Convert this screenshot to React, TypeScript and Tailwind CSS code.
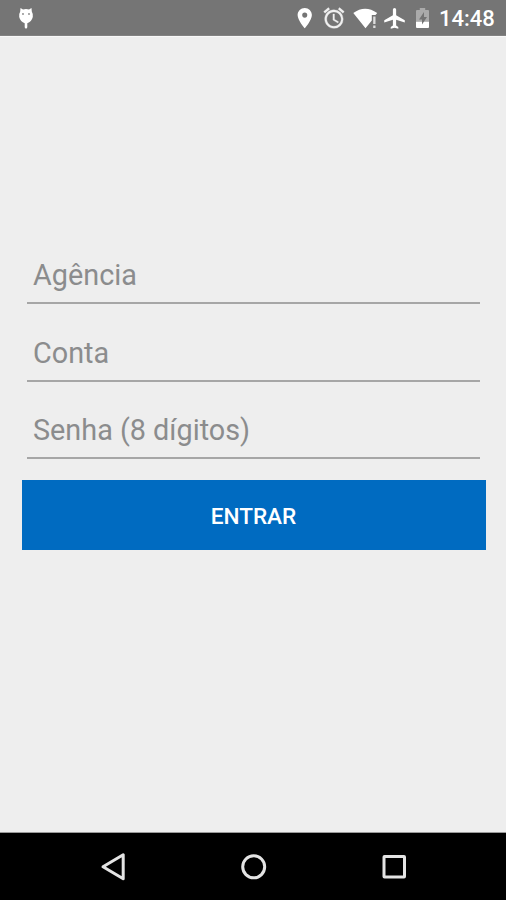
import type { ReactNode } from "react";

function Field({ label }: { label: string }) {
  return (
    <label className="flex h-[77.5px] w-[453px] flex-col justify-end">
      <span className="pl-[6px] text-[28.8px] leading-[34px] text-[#8b8c8d]">{label}</span>
      <span className="mt-[10px] h-[2px] w-full bg-[#a6a6a6]" />
    </label>
  );
}

function StatusIcon({ w, children }: { w: number; children: ReactNode }) {
  return (
    <svg width={w} height="35" viewBox={`0 0 ${w} 35`} className="block shrink-0" fill="#fff">
      {children}
    </svg>
  );
}

function StatusBar() {
  return (
    <header className="flex h-[36px] shrink-0 items-start border-b border-[#828282] bg-[#757575]">
      <div className="flex w-[292px] pl-[16px]">
        <StatusIcon w={20}>
          <path d="M4.5 8 L7 9.6 Q10 8.6 13 9.6 L15.5 8 L15.8 11.5 Q17.3 14 16.8 17 Q15.5 22 11.3 23.2 V27 Q11.3 28.6 10 28.6 Q8.7 28.6 8.7 27 V23.2 Q4.5 22 3.2 17 Q2.7 14 4.2 11.5Z" />
          <circle cx="7" cy="14" r="0.9" fill="#858585" />
          <circle cx="13" cy="14" r="0.9" fill="#858585" />
        </StatusIcon>
      </div>
      <StatusIcon w={29}>
        <path transform="translate(0.5 5.9) scale(1.02)" d="M12 2C8.13 2 5 5.13 5 9c0 5.25 7 13 7 13s7-7.75 7-13c0-3.87-3.13-7-7-7zm0 9.5a2.5 2.5 0 1 1 0-5 2.5 2.5 0 0 1 0 5z" />
      </StatusIcon>
      <StatusIcon w={31}>
        <path transform="translate(0.6 5.7) scale(1.03)" fill="#f0f0f0" stroke="#f0f0f0" strokeWidth="0.3" d="M22 5.72l-4.6-3.86-1.29 1.53 4.6 3.86L22 5.72zM7.88 3.39L6.6 1.86 2 5.71l1.29 1.53 4.59-3.85zM12.5 8H11v6l4.75 2.85.75-1.23-4-2.37V8zM12 4c-4.97 0-9 4.03-9 9s4.02 9 9 9a9 9 0 0 0 0-18zm0 16c-3.87 0-7-3.13-7-7s3.13-7 7-7 7 3.13 7 7-3.13 7-7 7z" />
      </StatusIcon>
      <StatusIcon w={30}>
        <path d="M1.3 13 Q13 4.5 25.2 13 L23.5 15 H19.8 V20.5 L13.5 28.3Z" />
        <path d="M21.2 16.5h2.3v7.5h-2.3zM21.2 25.5h2.3v2.5h-2.3z" fill="#ddd" />
      </StatusIcon>
      <StatusIcon w={31}>
        <path transform="translate(0.1 5.8) scale(1.08 1.04)" d="M21 16v-2l-8-5V3.5a1.5 1.5 0 0 0-3 0V9l-8 5v2l8-2.5V19l-2 1.5V22l3.5-1 3.5 1v-1.5L13 19v-5.5l8 2.5z" />
      </StatusIcon>
      <StatusIcon w={27}>
        <path d="M4 10H6.8V8h5.4v2H15a1 1 0 0 1 1 1v10H3V11a1 1 0 0 1 1-1z" fill="#aaa" />
        <path d="M3 21.5h13V27a1 1 0 0 1-1 1H4a1 1 0 0 1-1-1z" />
        <path d="M11 12L6 19.5h3V24.5l5-7.5h-3z" fill="#737373" />
      </StatusIcon>
      <time className="-ml-[1px] mt-[5px] text-[22px] font-medium leading-[28px] text-white">14:48</time>
    </header>
  );
}

export default function App() {
  return (
    <div className="flex h-[900px] w-[506px] flex-col overflow-hidden bg-[#eeeeee] font-['Roboto',sans-serif]">
      <StatusBar />
      <main className="flex flex-1 flex-col border-t border-[#f8f8f8] pl-[27px] pt-[189.5px]">
        <Field label="Agência" />
        <Field label="Conta" />
        <Field label="Senha (8 dígitos)" />
        <button className="-ml-[5.5px] mt-[21px] h-[70px] w-[464px] shrink-0 bg-[#006bc1] pt-[3px] text-[22.6px] font-medium text-white">
          ENTRAR
        </button>
      </main>
      <nav className="flex h-[68px] shrink-0 items-start border-t border-[#999] bg-black">
        <svg width="506" height="67" viewBox="0 0 506 67" fill="none" stroke="#e4e4e4" strokeWidth="3">
          <path d="M103 33.8L123.2 21.8V45.8Z" strokeLinejoin="round" />
          <circle cx="253.7" cy="33.8" r="11" />
          <rect x="384" y="23.5" width="20.5" height="20.5" rx="0.5" />
        </svg>
      </nav>
    </div>
  );
}
